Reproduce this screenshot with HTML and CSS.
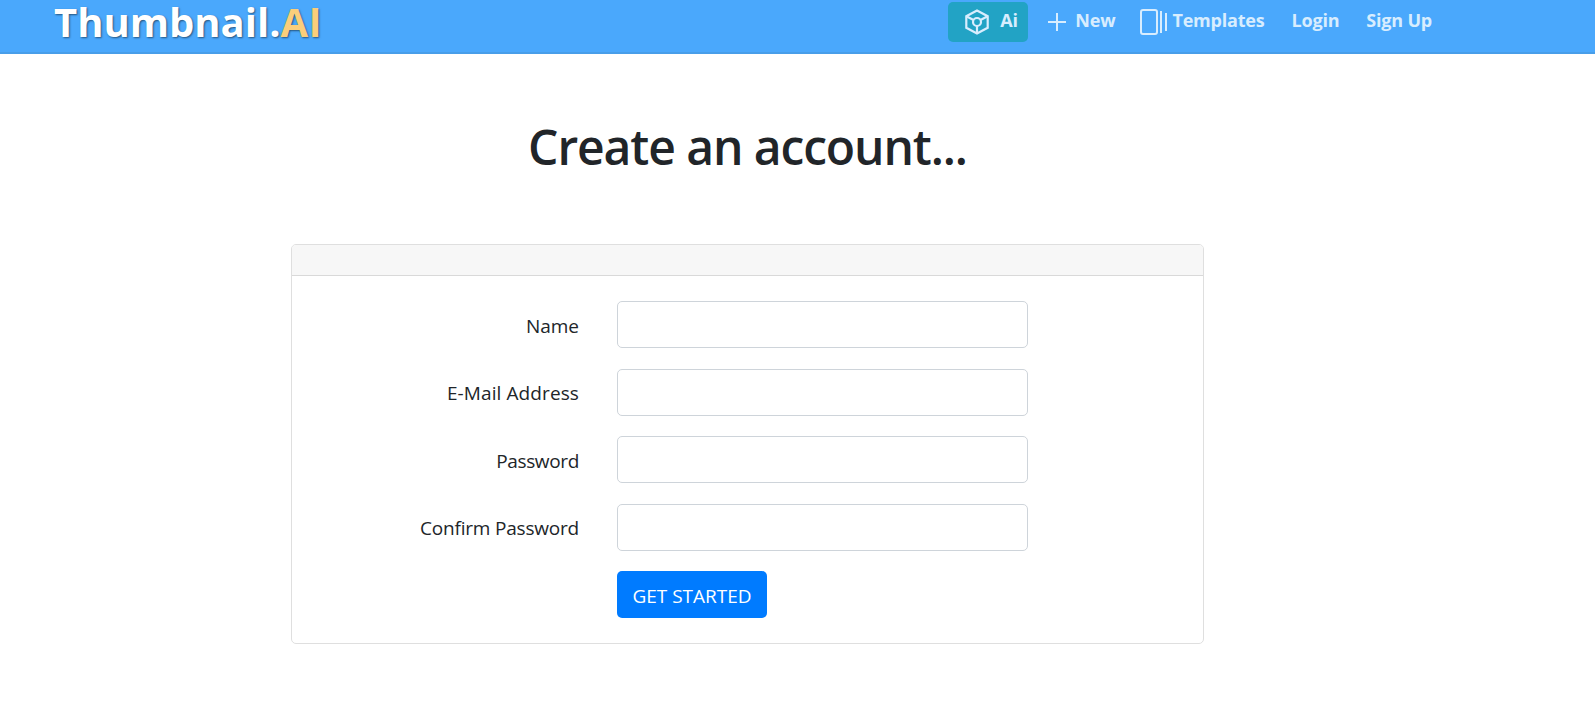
FILE: index.html
```html
<!DOCTYPE html>
<html lang="en">
<head>
    <meta charset="UTF-8">
    <meta name="viewport" content="width=device-width, initial-scale=1.0">
    <title>Thumbnail.AI</title>
    <link rel="stylesheet" href="styles.css">
</head>
<body>

    <nav class="navbar">
        <a class="brand" href="#">Thumbnail.<span class="brand-ai">A<span class="brand-i">I</span></span></a>
        <div class="nav-links">
            <a class="nav-link nav-ai" href="#">
                <svg class="icon-cube" width="26" height="26" viewBox="0 0 26 26" fill="none" stroke="currentColor" stroke-width="2.2">
                    <path d="M13 1.5L23.7 7.2V18.8L13 24.5L2.3 18.8V7.2Z"/>
                    <circle cx="13" cy="13" r="4"/>
                    <path d="M2.3 7.2L9.5 11M23.7 7.2L16.5 11M13 17V24.5"/>
                </svg>
                <span>Ai</span>
            </a>
            <a class="nav-link nav-new" href="#">
                <svg width="20" height="20" viewBox="0 0 20 20" fill="none" stroke="currentColor" stroke-width="2">
                    <path d="M10 1V19M1 10H19"/>
                </svg>
                <span>New</span>
            </a>
            <a class="nav-link nav-templates" href="#">
                <svg width="27" height="26" viewBox="0 0 27 26" fill="none" stroke="currentColor" stroke-width="2">
                    <rect x="1" y="1" width="16" height="24" rx="2"/>
                    <path d="M21 2V24M26 4V22"/>
                </svg>
                <span>Templates</span>
            </a>
            <a class="nav-link nav-login" href="#">Login</a>
            <a class="nav-link nav-signup" href="#">Sign Up</a>
        </div>
    </nav>

    <main class="container">
        <h1>Create an account...</h1>

        <div class="card">
            <div class="card-header"></div>
            <form class="card-body">
                <div class="form-group">
                    <label for="name">Name</label>
                    <input type="text" id="name" name="name" required>
                </div>

                <div class="form-group">
                    <label class="label-email" for="email">E-Mail Address</label>
                    <input type="email" id="email" name="email" required>
                </div>

                <div class="form-group">
                    <label class="label-password" for="password">Password</label>
                    <input type="password" id="password" name="password" required>
                </div>

                <div class="form-group">
                    <label class="label-confirm" for="password-confirm">Confirm Password</label>
                    <input type="password" id="password-confirm" name="password_confirmation" required>
                </div>

                <div class="form-group form-actions">
                    <button type="submit">GET STARTED</button>
                </div>
            </form>
        </div>
    </main>

</body>
</html>
```
FILE: styles.css
```css
* {
    box-sizing: border-box;
}

body {
    margin: 0;
    font-family: 'Open Sans', 'Noto Sans', sans-serif;
    font-size: 19px;
    color: #212529;
    background-color: #fff;
}

.navbar {
    display: flex;
    justify-content: space-between;
    align-items: flex-start;
    height: 54px;
    padding: 0 163px 0 54px;
    background-color: #4aa8fc;
    border-bottom: 2px solid #489ee9;
}

.brand {
    font-size: 40px;
    font-weight: 700;
    line-height: 44px;
    color: #fff;
    text-decoration: none;
    text-shadow: 1px 1px 2px rgba(0, 0, 0, 0.5);
}

.brand-ai {
    color: #fbce7b;
}

.brand-i {
    margin-left: 1px;
    font-family: Roboto, sans-serif;
}

.nav-links {
    display: flex;
    padding-top: 2px;
}

.nav-link {
    display: flex;
    height: 40px;
    font-size: 18px;
    font-weight: 700;
    line-height: 37px;
    letter-spacing: -0.2px;
    color: #d8edfe;
    text-decoration: none;
    white-space: nowrap;
}

.nav-link svg {
    margin-top: 7px;
}

.nav-ai {
    width: 80px;
    padding-left: 16px;
    gap: 10px;
    background-color: #22a3c5;
    border-radius: 5px;
}

.nav-new {
    margin-left: 19px;
    gap: 8px;
}

.nav-new svg {
    margin-top: 10px;
}

.nav-templates {
    margin-left: 25px;
    gap: 5px;
}

.nav-login {
    margin-left: 27px;
}

.nav-signup {
    margin-left: 27px;
}

.container {
    width: 913px;
    margin: 0 0 0 291px;
}

h1 {
    margin: 0;
    padding-top: 59px;
    padding-bottom: 63px;
    font-size: 48px;
    font-weight: 600;
    line-height: 68px;
    letter-spacing: -1.1px;
    text-align: center;
}

.card {
    height: 400px;
    border: 1px solid #dfdfdf;
    border-radius: 5px;
}

.card-header {
    height: 31px;
    background-color: #f7f7f7;
    border-bottom: 1px solid #d9d9d9;
    border-radius: 4px 4px 0 0;
}

.card-body {
    display: flex;
    flex-direction: column;
    gap: 20.6px;
    padding-top: 25px;
}

.form-group {
    display: grid;
    grid-template-columns: 287px 411px;
    column-gap: 38px;
    height: 47px;
}

.form-group label {
    padding-top: 8.5px;
    line-height: 32px;
    text-align: right;
}

.label-email {
    letter-spacing: 0.1px;
}

.label-password {
    letter-spacing: -0.35px;
}

.label-confirm {
    letter-spacing: -0.2px;
}

.form-group input {
    width: 100%;
    height: 47px;
    padding: 7px 15px;
    border: 1px solid #ced4da;
    border-radius: 5px;
    font-family: inherit;
    font-size: 19px;
}

.form-actions button {
    grid-column: 2;
    width: 150px;
    height: 47px;
    padding: 3px 0 0;
    border: none;
    border-radius: 5px;
    background-color: #007bff;
    color: #fff;
    font-family: inherit;
    font-size: 19px;
    cursor: pointer;
}
```
